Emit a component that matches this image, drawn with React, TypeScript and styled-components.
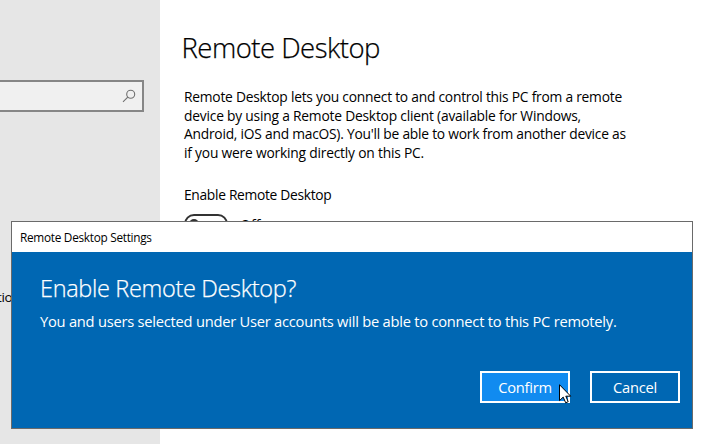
import React from "react";
import styled, { createGlobalStyle } from "styled-components";

const GlobalStyle = createGlobalStyle`
  * { box-sizing: border-box; }
  body {
    margin: 0;
    overflow: hidden;
    background: #fff;
    color: #000;
    font-family: "Open Sans", "Noto Sans", sans-serif;
  }
`;

const Screen = styled.div`
  position: relative;
  display: flex;
  width: 714px;
  height: 444px;
  overflow: hidden;
`;

const Sidebar = styled.aside`
  display: flex;
  flex-direction: column;
  width: 160px;
  background: #e6e6e6;
  padding-top: 80px;
  overflow: hidden;
`;

const SearchBox = styled.div`
  display: flex;
  align-items: center;
  justify-content: flex-end;
  width: 146px;
  height: 32px;
  margin-left: -2px;
  padding-right: 6px;
  border: 2px solid #868686;
  background: #f0f0f0;
`;

const NavItem = styled.div`
  margin-top: 175px;
  margin-left: -3px;
  font-size: 13.5px;
  line-height: 20px;
  letter-spacing: -0.4px;
`;

const Content = styled.main`
  flex: 1;
  display: flex;
  flex-direction: column;
  padding: 28px 0 0 24px;
`;

const PageTitle = styled.h1`
  margin: 0 0 20px -2.5px;
  font-size: 27.5px;
  font-weight: 300;
  line-height: 40px;
  letter-spacing: -0.52px;
  -webkit-text-stroke: 0.25px currentColor;
`;

const Description = styled.p`
  margin: 0;
  font-size: 13.8px;
  line-height: 18.5px;
  white-space: nowrap;
`;

const Line = styled.span<{ $spacing: number }>`
  display: block;
  letter-spacing: ${(p) => p.$spacing}px;
`;

const SettingLabel = styled.div`
  margin-top: 23px;
  font-size: 13.8px;
  line-height: 20px;
  letter-spacing: -0.31px;
`;

const ToggleRow = styled.div`
  display: flex;
  align-items: center;
  gap: 12px;
  height: 20px;
  margin-top: 9px;
`;

const Toggle = styled.span`
  display: flex;
  align-items: center;
  width: 44px;
  height: 20px;
  padding-left: 3px;
  border: 2px solid #333;
  border-radius: 10px;
`;

const ToggleState = styled.span`
  padding-top: 1px;
  font-size: 14px;
  font-weight: 500;
  line-height: 20px;
`;

const Knob = styled.span`
  width: 10px;
  height: 10px;
  border-radius: 50%;
  background: #333;
`;

const Dialog = styled.section`
  position: absolute;
  left: 11px;
  top: 221px;
  display: flex;
  flex-direction: column;
  width: 682px;
  height: 208px;
  border: 1px solid #6a6a6a;
  background: #0067b3;
  color: #fff;
`;

const DialogTitleBar = styled.header`
  height: 30px;
  padding-left: 8px;
  background: #fff;
  color: #000;
  font-size: 11.8px;
  line-height: 30px;
  letter-spacing: -0.28px;
`;

const DialogBody = styled.div`
  flex: 1;
  display: flex;
  flex-direction: column;
  padding: 20px 12px 25px 28px;
`;

const DialogHeading = styled.h2`
  margin: 0;
  font-size: 23.5px;
  font-weight: 300;
  line-height: 32px;
  letter-spacing: -0.33px;
  -webkit-text-stroke: 0.25px currentColor;
`;

const DialogText = styled.p`
  margin: 7px 0 0;
  font-size: 14.7px;
  line-height: 20px;
  letter-spacing: -0.24px;
  white-space: nowrap;
`;

const Actions = styled.div`
  display: flex;
  justify-content: flex-end;
  gap: 20px;
  margin-top: auto;
`;

const Button = styled.button<{ $active?: boolean }>`
  width: 90px;
  height: 32px;
  padding: 0;
  border: 2px solid #fff;
  background: ${(p) => (p.$active ? "#118bf0" : "transparent")};
  color: #fff;
  font: 400 14.7px/26px "Open Sans", "Noto Sans", sans-serif;
  letter-spacing: -0.25px;
`;

const Pointer = styled.svg`
  position: absolute;
  left: 559px;
  top: 384px;
`;

const SearchIcon = () => (
  <svg width="14" height="14" viewBox="0 0 14 14" fill="none" stroke="#707070" strokeWidth="1.1">
    <circle cx="8.7" cy="5.2" r="4" />
    <path d="M5.8 8.1 L1 12.9" />
  </svg>
);

export default function App() {
  return (
    <Screen>
      <GlobalStyle />
      <Sidebar>
        <SearchBox>
          <SearchIcon />
        </SearchBox>
        <NavItem>tio</NavItem>
      </Sidebar>
      <Content>
        <PageTitle>Remote Desktop</PageTitle>
        <Description>
          <Line $spacing={-0.234}>Remote Desktop lets you connect to and control this PC from a remote</Line>
          <Line $spacing={-0.208}>device by using a Remote Desktop client (available for Windows,</Line>
          <Line $spacing={-0.234}>Android, iOS and macOS). You'll be able to work from another device as</Line>
          <Line $spacing={-0.203}>if you were working directly on this PC.</Line>
        </Description>
        <SettingLabel>Enable Remote Desktop</SettingLabel>
        <ToggleRow>
          <Toggle>
            <Knob />
          </Toggle>
          <ToggleState>Off</ToggleState>
        </ToggleRow>
      </Content>
      <Dialog>
        <DialogTitleBar>Remote Desktop Settings</DialogTitleBar>
        <DialogBody>
          <DialogHeading>Enable Remote Desktop?</DialogHeading>
          <DialogText>
            You and users selected under User accounts will be able to connect to this PC remotely.
          </DialogText>
          <Actions>
            <Button $active>Confirm</Button>
            <Button>Cancel</Button>
          </Actions>
        </DialogBody>
      </Dialog>
      <Pointer width="13" height="20" viewBox="0 0 13 20">
        <path
          d="M0.5 0.7 V16.6 L4.2 13.1 L6.7 18.8 L9.2 17.7 L6.8 12.2 H11.7 Z"
          fill="#fff"
          stroke="#000"
          strokeWidth="1"
        />
      </Pointer>
    </Screen>
  );
}
